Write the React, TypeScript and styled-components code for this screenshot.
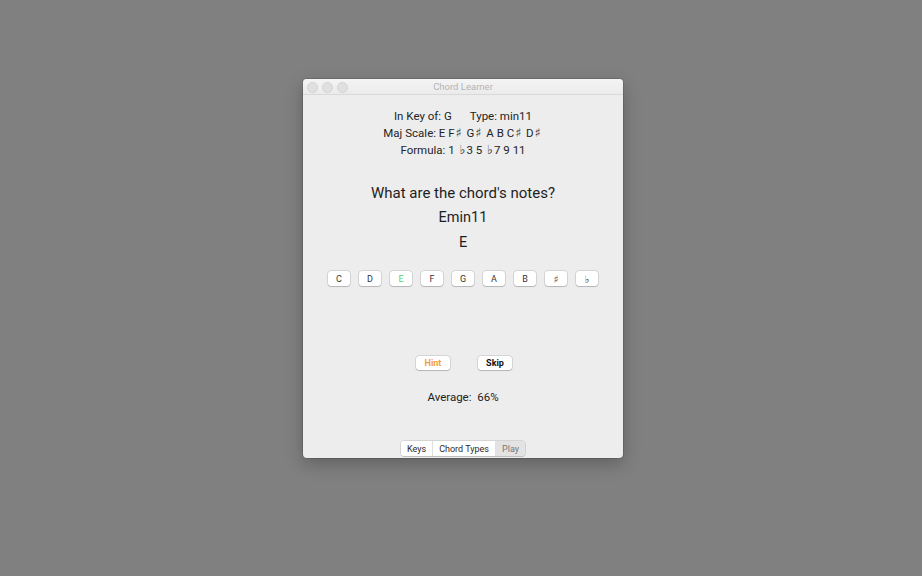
import styled, { createGlobalStyle } from "styled-components";

const GlobalStyle = createGlobalStyle`
  html, body {
    margin: 0;
    padding: 0;
    background: #808080;
  }
`;

const SHARP = "\u266F";
const FLAT = "\u266D";
const NOTES = ["C", "D", "E", "F", "G", "A", "B", SHARP, FLAT];

const App: React.FC = () => {
  return (
    <>
      <GlobalStyle />
      <Desktop>
        <Window>
          <TitleBar>
            <Lights>
              <Light />
              <Light />
              <Light />
            </Lights>
            <Title>Chord Learner</Title>
          </TitleBar>
          <Content>
            <InfoBlock>
              <InfoLine>
                <span>In Key of: G</span>
                <Gap />
                <span>Type: min11</span>
              </InfoLine>
              <InfoLine>
                Maj Scale: E F<Acc>{SHARP}</Acc> G<Acc>{SHARP}</Acc> A B C
                <Acc>{SHARP}</Acc> D<Acc>{SHARP}</Acc>
              </InfoLine>
              <InfoLine>
                Formula: 1 <Acc $lead>{FLAT}</Acc>3 5 <Acc $lead>{FLAT}</Acc>7 9 11
              </InfoLine>
            </InfoBlock>
            <Question>What are the chord's notes?</Question>
            <ChordName>Emin11</ChordName>
            <Answer>E</Answer>
            <NoteRow>
              {NOTES.map((n) => (
                <NoteButton key={n} $correct={n === "E"} $symbol={n === SHARP || n === FLAT}>
                  {n}
                </NoteButton>
              ))}
            </NoteRow>
            <ActionRow>
              <ActionButton $hint>Hint</ActionButton>
              <ActionButton>Skip</ActionButton>
            </ActionRow>
            <Average>Average:&nbsp; 66%</Average>
            <Segmented>
              <Segment>Keys</Segment>
              <Segment>Chord Types</Segment>
              <Segment $selected>Play</Segment>
            </Segmented>
          </Content>
        </Window>
      </Desktop>
    </>
  );
};

const Desktop = styled.div`
  width: 922px;
  height: 576px;
  box-sizing: border-box;
  padding: 79px 0 0 303px;
  background: #808080;
`;

const Window = styled.div`
  width: 320px;
  height: 379px;
  display: flex;
  flex-direction: column;
  background: #ededed;
  border-radius: 4px;
  overflow: hidden;
  box-shadow: 0 6px 18px rgba(0, 0, 0, 0.25), 0 0 0 1px rgba(0, 0, 0, 0.12);
  font-family: "Roboto", "Liberation Sans", sans-serif;
  color: #222;
`;

const TitleBar = styled.div`
  height: 15px;
  flex-shrink: 0;
  display: flex;
  align-items: center;
  justify-content: center;
  position: relative;
  background: linear-gradient(#f4f4f4, #ebebeb);
  border-bottom: 1px solid #d9d9d9;
`;

const Lights = styled.div`
  position: absolute;
  left: 4px;
  top: 3px;
  display: flex;
  gap: 4px;
`;

const Light = styled.div`
  width: 9px;
  height: 9px;
  border-radius: 50%;
  background: #e0e0e0;
  border: 0.5px solid #d2d2d2;
`;

const Title = styled.div`
  font-size: 9.5px;
  color: #b4b4b4;
`;

const Content = styled.div`
  flex: 1;
  display: flex;
  flex-direction: column;
  align-items: center;
  padding-top: 13px;
`;

const InfoBlock = styled.div`
  display: flex;
  flex-direction: column;
  align-items: center;
`;

const InfoLine = styled.div`
  font-size: 11.5px;
  line-height: 17px;
  height: 17px;
  color: #242424;
  white-space: pre;
`;

const Acc = styled.span<{ $lead?: boolean }>`
  font-family: "DejaVu Sans", sans-serif;
  font-size: 12.5px;
  line-height: 10px;
  color: #3a3a3a;
  margin: ${(p) => (p.$lead ? "0 1px 0 2px" : "0 2px 0 1px")};
`;

const Gap = styled.span`
  display: inline-block;
  width: 18px;
`;

const Question = styled.div`
  margin-top: 24px;
  font-size: 15px;
  line-height: 20px;
  color: #1e1e1e;
`;

const ChordName = styled.div`
  margin-top: 5px;
  font-size: 14.5px;
  line-height: 20px;
  color: #1e1e1e;
`;

const Answer = styled(ChordName)``;

const NoteRow = styled.div`
  margin-top: 18px;
  display: flex;
  gap: 9px;
`;

const NoteButton = styled.div<{ $correct?: boolean; $symbol?: boolean }>`
  width: 22px;
  height: 15px;
  box-sizing: border-box;
  display: flex;
  align-items: center;
  justify-content: center;
  font-family: ${(p) => (p.$symbol ? '"DejaVu Sans", sans-serif' : "inherit")};
  font-size: ${(p) => (p.$symbol ? "10.5px" : "9px")};
  color: ${(p) => (p.$correct ? "#5ad45a" : p.$symbol ? "#555" : "#333")};
  background: #ffffff;
  border-radius: 3px;
  box-shadow: 0 0 0 0.5px rgba(0, 0, 0, 0.2), 0 1px 1px rgba(0, 0, 0, 0.15);
`;

const ActionRow = styled.div`
  margin-top: 70px;
  display: flex;
  gap: 28px;
  margin-left: 2px;
`;

const ActionButton = styled.div<{ $hint?: boolean }>`
  width: 34px;
  height: 14px;
  display: flex;
  align-items: center;
  justify-content: center;
  font-size: 9px;
  font-weight: 700;
  color: ${(p) => (p.$hint ? "#f0a040" : "#111")};
  background: #ffffff;
  border-radius: 3px;
  box-shadow: 0 0 0 0.5px rgba(0, 0, 0, 0.2), 0 1px 1px rgba(0, 0, 0, 0.15);
`;

const Average = styled.div`
  margin-top: 20px;
  font-size: 11.5px;
  line-height: 15px;
  color: #222;
`;

const Segmented = styled.div`
  margin-top: 36px;
  display: flex;
  height: 15px;
  background: #ffffff;
  border-radius: 3px;
  overflow: hidden;
  box-shadow: 0 0 0 0.5px rgba(0, 0, 0, 0.2), 0 1px 1px rgba(0, 0, 0, 0.12);
`;

const Segment = styled.div<{ $selected?: boolean }>`
  padding: 0 6px;
  display: flex;
  align-items: center;
  font-size: 9px;
  color: ${(p) => (p.$selected ? "#777" : "#2a2a2a")};
  background: ${(p) => (p.$selected ? "#e3e3e3" : "#ffffff")};
  & + & {
    border-left: 0.5px solid #e0e0e0;
  }
`;

export default App;
